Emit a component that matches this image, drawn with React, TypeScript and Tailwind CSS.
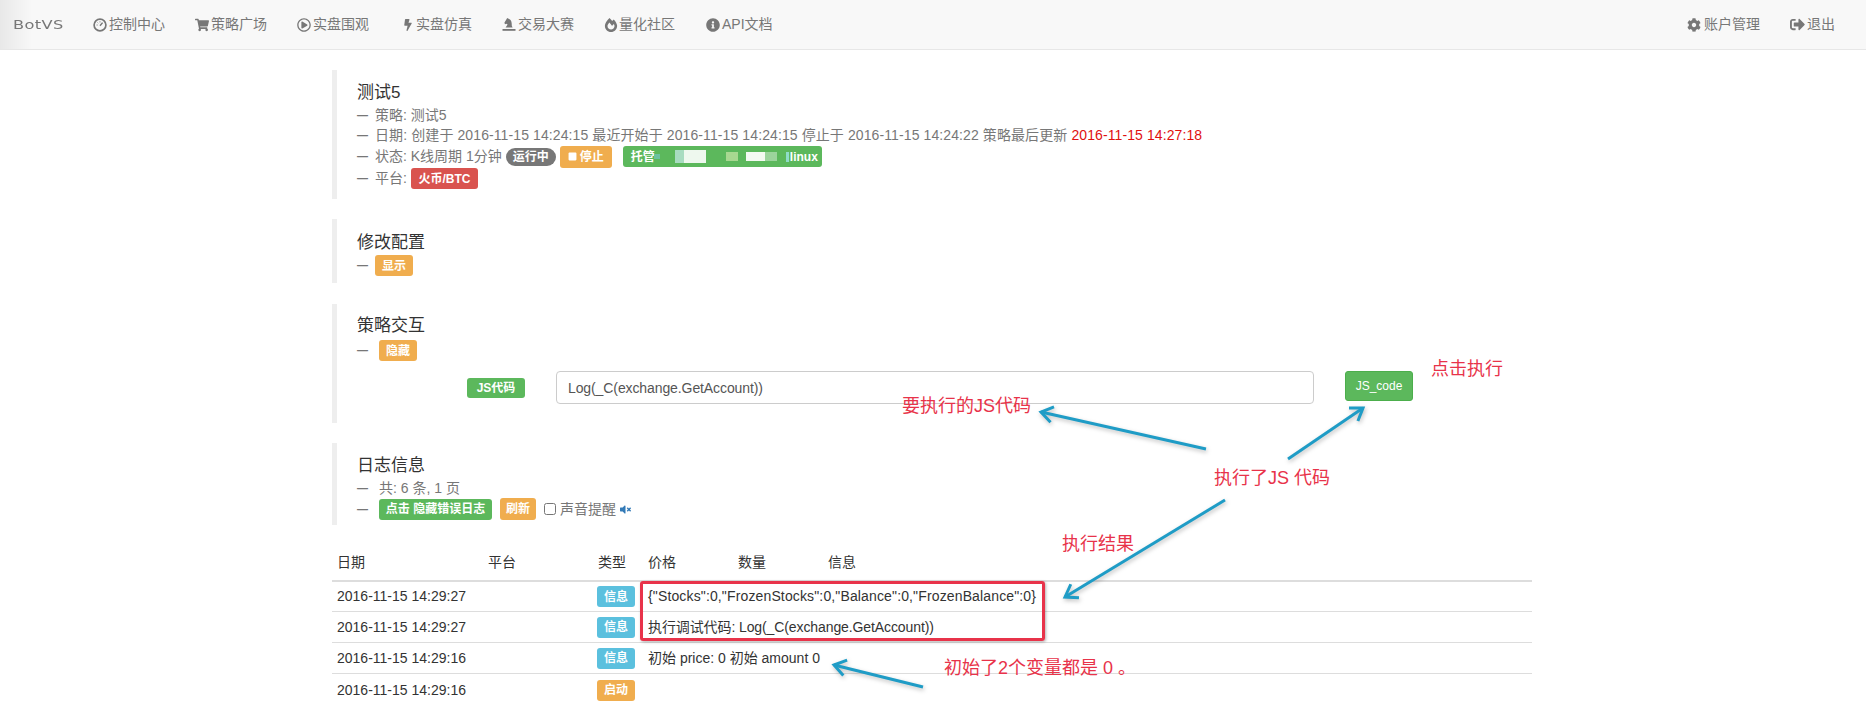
import React from 'react';
import {
    FaBolt,
    FaCog,
    FaFireAlt,
    FaInfoCircle,
    FaRegPlayCircle,
    FaShoppingCart,
    FaSignOutAlt,
    FaSquare,
    FaVolumeMute,
} from 'react-icons/fa';

const Gauge = () => (
    <svg width="14" height="14" viewBox="0 0 14 14" fill="none" stroke="currentColor">
        <circle cx="7" cy="7" r="5.9" strokeWidth="1.7" />
        <path d="M7 7.8 L9.6 4.6" strokeWidth="1.5" />
        <path d="M3.6 7h1M7 3.4v1M4.6 4.6l.6.6" strokeWidth="1" />
    </svg>
);

const Knight = () => (
    <svg width="14" height="15" viewBox="0 0 14 15" fill="currentColor">
        <path d="M5.2 1 L8 2.6 C9.4 3.6 9.8 5.4 9.8 8.8 L10.6 10.4 H3.6 L5.6 7.4 L4.4 6.8 L3 7.2 L2.4 5.8 Z" />
        <rect x="0.5" y="12" width="13" height="1.8" />
    </svg>
);

const navItems = [
    { text: '控制中心', icon: <Gauge />, cls: 'w-[16px]', gap: 'ml-0' },
    { text: '策略广场', icon: <FaShoppingCart size={14} />, cls: 'w-[16px]', gap: 'ml-[30px]' },
    { text: '实盘围观', icon: <FaRegPlayCircle size={14} />, cls: 'w-[16px]', gap: 'ml-[30px]' },
    { text: '实盘仿真', icon: <FaBolt size={12} />, cls: 'w-[14px]', gap: 'ml-[33px]' },
    { text: '交易大赛', icon: <Knight />, cls: 'w-[16px]', gap: 'ml-[30px]' },
    { text: '量化社区', icon: <FaFireAlt size={14} />, cls: 'w-[15px]', gap: 'ml-[30px]' },
    { text: 'API文档', icon: <FaInfoCircle size={14} />, cls: 'w-[16px]', gap: 'ml-[31px]' },
];

const Badge = ({ color, className = '', children }: { color: string; className?: string; children: React.ReactNode }) => (
    <span className={`inline-flex items-center justify-center rounded-[3px] text-[12px] font-bold text-white ${color} ${className}`}>
        {children}
    </span>
);

const Dash = ({ wide }: { wide?: boolean }) => (
    <span className={`inline-block text-[11px] font-bold text-[#777] ${wide ? 'w-[22px]' : 'w-[18px]'}`}>—</span>
);

const logs = [
    { date: '2016-11-15 14:29:27', type: '信息', color: 'bg-[#5bc0de]', msg: '{"Stocks":0,"FrozenStocks":0,"Balance":0,"FrozenBalance":0}', h: 'h-[30px]', track: 'tracking-[0.14px]' },
    { date: '2016-11-15 14:29:27', type: '信息', color: 'bg-[#5bc0de]', msg: '执行调试代码: Log(_C(exchange.GetAccount))', h: 'h-[31px]', track: 'tracking-[-0.1px]' },
    { date: '2016-11-15 14:29:16', type: '信息', color: 'bg-[#5bc0de]', msg: '初始 price: 0 初始 amount 0', h: 'h-[31px]', track: '' },
    { date: '2016-11-15 14:29:16', type: '启动', color: 'bg-[#f0ad4e]', msg: '', h: 'h-[33px]', track: '' },
];

const arrows = [
    [1206, 449, 1041, 412],
    [1288, 459, 1363, 408],
    [1225, 500, 1065, 597],
    [923, 687, 834, 665],
];

// open arrow head on the end of the line
const headPath = (x1: number, y1: number, x2: number, y2: number) => {
    const a = Math.atan2(y1 - y2, x1 - x2);
    const len = 14;
    const p = (d: number) => `${x2 + len * Math.cos(a + d)} ${y2 + len * Math.sin(a + d)}`;
    return `M${p(0.6)} L${x2} ${y2} L${p(-0.6)}`;
};

const notes = [
    { text: '点击执行', cls: 'left-[1431px] top-[357px]' },
    { text: '要执行的JS代码', cls: 'left-[902px] top-[394px]' },
    { text: '执行了JS 代码', cls: 'left-[1214px] top-[466px]' },
    { text: '执行结果', cls: 'left-[1062px] top-[532px]' },
    { text: '初始了2个变量都是 0 。', cls: 'left-[944px] top-[656px]' },
];

const App = () => {
    return (
        <div className="relative h-screen overflow-hidden bg-white font-['Liberation_Sans','Noto_Sans_CJK_SC',sans-serif] text-[14px] text-[#333]">
            <nav className="flex h-[50px] items-center border-b border-[#e7e7e7] bg-[linear-gradient(to_right,#e8e8e8,#f8f8f8_32px)] text-[#777]">
                <div className="w-[93px] pl-[13px]">
                    <span className="inline-block origin-left scale-x-[1.35] font-['DejaVu_Sans',sans-serif] text-[12px] tracking-[0.3px] text-[#777]">
                        BotVS
                    </span>
                </div>
                {navItems.map((item) => (
                    <div key={item.text} className={`flex items-center ${item.gap}`}>
                        <span className={`flex ${item.cls}`}>{item.icon}</span>
                        <span>{item.text}</span>
                    </div>
                ))}
                <div className="ml-auto flex items-center pr-[31px]">
                    <FaCog size={14} className="mr-[3px]" />
                    <span>账户管理</span>
                    <FaSignOutAlt size={15} className="ml-[30px] mr-[2px]" />
                    <span>退出</span>
                </div>
            </nav>

            <main className="ml-[332px] mt-[20px] w-[1200px]">
                <section className="border-l-[5px] border-[#eee] pb-[10px] pl-[20px] pt-[11px]">
                    <h2 className="h-[24px] text-[17px] leading-[24px]">测试5</h2>
                    <div className="flex h-[21px] items-center text-[#777]">
                        <Dash />策略: 测试5
                    </div>
                    <div className="flex h-[19px] items-center tracking-[0.1px] text-[#777]">
                        <Dash />日期: 创建于 2016-11-15 14:24:15 最近开始于 2016-11-15 14:24:15 停止于 2016-11-15 14:24:22 策略最后更新&nbsp;
                        <span className="text-[#e01010]">2016-11-15 14:27:18</span>
                    </div>
                    <div className="flex h-[23px] items-center text-[#777]">
                        <Dash />状态: K线周期 1分钟
                        <Badge color="bg-[#777]" className="ml-[4px] h-[18px] w-[50px] rounded-[9px]">运行中</Badge>
                        <Badge color="bg-[#f0ad4e]" className="ml-[4px] h-[22px] w-[52px] gap-[3px]">
                            <FaSquare size={9} />停止
                        </Badge>
                        <Badge color="bg-[#5cb85c]" className="ml-[11px] h-[21px] w-[199px] !justify-start pl-[8px]">
                            托管
                            <span className="ml-[-1px] h-[5px] w-[6px] bg-[#6cc2a0]" />
                            <span className="ml-[15px] h-[13px] w-[9px] bg-[#a8dcc0]" />
                            <span className="h-[13px] w-[22px] bg-[#eef8ee]" />
                            <span className="ml-[20px] h-[9px] w-[12px] bg-[#a8d890]" />
                            <span className="ml-[8px] h-[9px] w-[19px] bg-[#f4faf2]" />
                            <span className="h-[9px] w-[12px] bg-[#9cd49c]" />
                            <span className="ml-[9px] h-[10px] w-[3px] bg-[#8fdcc8]" />
                            <span className="ml-[1px]">linux</span>
                        </Badge>
                    </div>
                    <div className="flex h-[21px] items-center text-[#777]">
                        <Dash />平台:
                        <Badge color="bg-[#d9534f]" className="ml-[4px] h-[21px] w-[67px]">火币/BTC</Badge>
                    </div>
                </section>

                <section className="mt-[20px] border-l-[5px] border-[#eee] pb-[7px] pl-[20px] pt-[11px]">
                    <h2 className="h-[24px] pt-[1px] text-[17px] leading-[24px]">修改配置</h2>
                    <div className="mt-[1px] flex h-[21px] items-center">
                        <Dash />
                        <Badge color="bg-[#f0ad4e]" className="h-[21px] w-[38px]">显示</Badge>
                    </div>
                </section>

                <section className="mt-[21px] border-l-[5px] border-[#eee] pb-[19px] pl-[20px] pt-[10px]">
                    <h2 className="h-[24px] text-[17px] leading-[24px]">策略交互</h2>
                    <div className="mt-[2px] flex h-[21px] items-center">
                        <Dash wide />
                        <Badge color="bg-[#f0ad4e]" className="h-[21px] w-[38px]">隐藏</Badge>
                    </div>
                    <div className="mt-[10px] flex items-start">
                        <Badge color="bg-[#5cb85c]" className="ml-[110px] mt-[7px] h-[20px] w-[58px]">JS代码</Badge>
                        <input
                            readOnly
                            value="Log(_C(exchange.GetAccount))"
                            className="ml-[31px] h-[33px] w-[758px] rounded-[4px] border border-[#ccc] bg-white pl-[11px] tracking-[-0.1px] text-[#555] outline-none"
                        />
                        <button className="ml-[31px] h-[30px] w-[68px] rounded-[3px] border border-[#4cae4c] bg-[#5cb85c] text-[12px] text-white">
                            JS_code
                        </button>
                    </div>
                </section>

                <section className="mt-[20px] border-l-[5px] border-[#eee] pb-[5px] pl-[20px] pt-[11px]">
                    <h2 className="h-[24px] text-[17px] leading-[24px]">日志信息</h2>
                    <div className="flex h-[20px] items-center text-[#777]">
                        <Dash wide />共: 6 条, 1 页
                    </div>
                    <div className="flex h-[22px] items-center text-[#777]">
                        <Dash wide />
                        <Badge color="bg-[#5cb85c]" className="h-[21px] w-[113px]">点击 隐藏错误日志</Badge>
                        <Badge color="bg-[#f0ad4e]" className="ml-[8px] h-[22px] w-[36px]">刷新</Badge>
                        <input type="checkbox" readOnly className="ml-[8px] mr-[4px] h-[12px] w-[12px]" />
                        声音提醒
                        <FaVolumeMute size={11} className="ml-[4px] text-[#337ab7]" />
                    </div>
                </section>

                <div className="mt-[23px] grid h-[34px] grid-cols-[151px_110px_50px_90px_90px_1fr] items-center border-b-2 border-[#ddd] pb-[3px] [&>span]:pl-[5px]">
                    <span>日期</span>
                    <span>平台</span>
                    <span>类型</span>
                    <span>价格</span>
                    <span>数量</span>
                    <span>信息</span>
                </div>
                {logs.map((row, i) => (
                    <div key={i} className={`grid ${row.h} grid-cols-[151px_110px_50px_1fr] items-center border-b border-[#ddd] [&>span]:pl-[5px]`}>
                        <span>{row.date}</span>
                        <span />
                        <span className="flex">
                            <Badge color={row.color} className="ml-[-1px] h-[21px] w-[38px] shrink-0">{row.type}</Badge>
                        </span>
                        <span className={row.track}>{row.msg}</span>
                    </div>
                ))}
            </main>

            {/* annotations pasted on top of the page */}
            <div className="absolute left-[640px] top-[581px] h-[60px] w-[405px] rounded-[3px] border-[3px] border-[#e8334a] shadow-[1px_1px_3px_rgba(0,0,0,0.3)]" />
            <svg
                className="pointer-events-none absolute left-0 top-0 drop-shadow-[1px_2px_2px_rgba(0,0,0,0.25)]"
                width="1866"
                height="705"
                fill="none"
                stroke="#1f9cc6"
                strokeWidth="3"
            >
                {arrows.map(([x1, y1, x2, y2], i) => (
                    <g key={i}>
                        <path d={`M${x1} ${y1} L${x2} ${y2}`} />
                        <path d={headPath(x1, y1, x2, y2)} />
                    </g>
                ))}
            </svg>
            {notes.map((note) => (
                <span key={note.text} className={`absolute whitespace-nowrap text-[18px] leading-[24px] text-[#e8334a] ${note.cls}`}>
                    {note.text}
                </span>
            ))}
        </div>
    );
};

export default App;
